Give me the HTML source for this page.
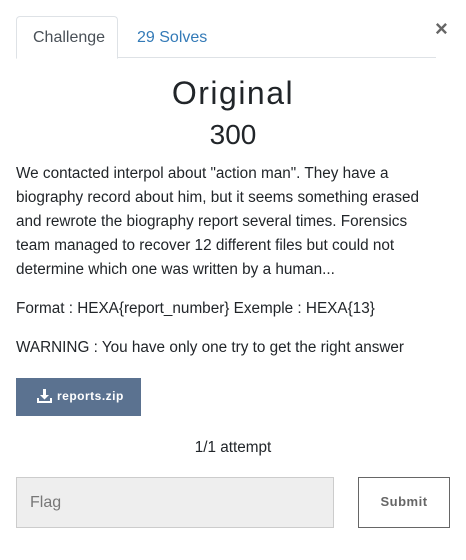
<!DOCTYPE html>
<html><head><style>
body{margin:0;width:466px;height:560px;background:#fff;font-family:"Liberation Sans",sans-serif;color:#212529;position:relative;overflow:hidden}
.a{position:absolute;white-space:nowrap}
</style></head><body>
<div class="a" style="left:16px;top:57px;width:420px;height:1px;background:#dee2e6"></div>
<div class="a" style="left:16px;top:16px;width:100px;height:41px;border:1px solid #dee2e6;border-bottom:1px solid #fff;border-radius:4px 4px 0 0;background:#fff"></div>
<div class="a" style="left:33px;top:29px;font-size:16px;color:#495057">Challenge</div>
<div class="a" style="left:137px;top:29px;font-size:16px;color:#337ab7">29 Solves</div>
<div class="a" style="left:435px;top:16px;font-size:22px;color:#666;font-weight:bold">×</div>
<div class="a" style="left:0;width:466px;text-align:center;top:75px;font-size:32px;letter-spacing:1.5px">Original</div>
<div class="a" style="left:0;width:466px;text-align:center;top:119px;font-size:28px">300</div>
<div class="a" style="left:16px;top:162px;font-size:15.3px;line-height:24px">We contacted interpol about "action man". They have a<br>biography record about him, but it seems something erased<br>and rewrote the biography report several times. Forensics<br>team managed to recover 12 different files but could not<br>determine which one was written by a human...</div>
<div class="a" style="left:16px;top:300px;font-size:15.3px">Format : HEXA{report_number} Exemple : HEXA{13}</div>
<div class="a" style="left:16px;top:339px;font-size:15.3px">WARNING : You have only one try to get the right answer</div>
<div class="a" style="left:16px;top:378px;width:125px;height:38px;background:#5b7290"></div>
<svg class="a" style="left:37px;top:389px" width="15" height="14" viewBox="0 0 15 14"><path d="M6 0h3v6h3l-4.5 4.5L3 6h3z M0 9h2v3h11V9h2v5H0z" fill="#fff"/></svg>
<div class="a" style="left:57px;top:389px;font-size:12px;color:#fff;font-weight:bold;letter-spacing:.5px">reports.zip</div>
<div class="a" style="left:0;width:466px;text-align:center;top:439px;font-size:15.3px">1/1 attempt</div>
<div class="a" style="left:16px;top:477px;width:316px;height:49px;background:#eee;border:1px solid #ccc"></div>
<div class="a" style="left:30px;top:494px;font-size:16px;color:#777">Flag</div>
<div class="a" style="left:358px;top:477px;width:90px;height:49px;border:1px solid #666"></div>
<div class="a" style="left:358px;width:92px;text-align:center;top:494px;font-size:13px;font-weight:bold;color:#666;letter-spacing:.5px">Submit</div>
</body></html>
